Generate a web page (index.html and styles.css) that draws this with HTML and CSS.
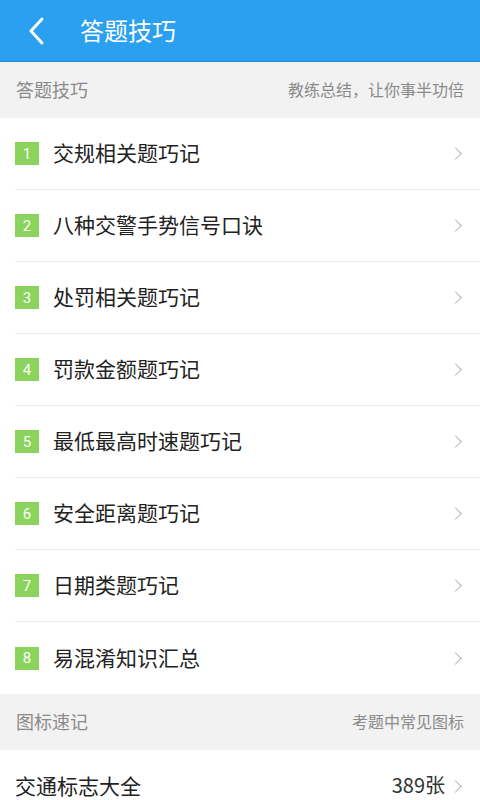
FILE: index.html
```html
<!DOCTYPE html>
<html lang="zh">
<head>
  <meta charset="UTF-8">
  <title>答题技巧</title>
  <link rel="stylesheet" href="styles.css">
</head>
<body>
  <header class="topbar">
    <svg class="back" width="20" height="30" viewBox="0 0 20 30">
      <polyline points="15,3 4,15 15,27" fill="none" stroke="#fff" stroke-width="3" stroke-linecap="round" stroke-linejoin="round"/>
    </svg>
    <h1>答题技巧</h1>
  </header>

  <div class="section-head">
    <span>答题技巧</span>
    <span class="hint">教练总结，让你事半功倍</span>
  </div>
  <ul class="list">
    <li><span class="num">1</span><span class="name">交规相关题巧记</span><i class="arrow"></i></li>
    <li><span class="num">2</span><span class="name">八种交警手势信号口诀</span><i class="arrow"></i></li>
    <li><span class="num">3</span><span class="name">处罚相关题巧记</span><i class="arrow"></i></li>
    <li><span class="num">4</span><span class="name">罚款金额题巧记</span><i class="arrow"></i></li>
    <li><span class="num">5</span><span class="name">最低最高时速题巧记</span><i class="arrow"></i></li>
    <li><span class="num">6</span><span class="name">安全距离题巧记</span><i class="arrow"></i></li>
    <li><span class="num">7</span><span class="name">日期类题巧记</span><i class="arrow"></i></li>
    <li><span class="num">8</span><span class="name">易混淆知识汇总</span><i class="arrow"></i></li>
  </ul>

  <div class="section-head">
    <span>图标速记</span>
    <span class="hint">考题中常见图标</span>
  </div>
  <ul class="list">
    <li><span class="name">交通标志大全</span><span class="count">389张</span><i class="arrow"></i></li>
  </ul>
</body>
</html>
```

FILE: styles.css
```css
body {
  margin: 0;
  font-family: "Noto Sans CJK SC", "Noto Sans", sans-serif;
  background-color: #f2f2f2;
  overflow: hidden;
}

.topbar {
  height: 59px;
  padding-bottom: 2px;
  background-color: #2b9ff0;
  border-bottom: 1px solid #2389d6;
  display: flex;
  align-items: center;
  padding-left: 27px;
}

.topbar .back {
  margin-top: 2px;
}

.topbar h1 {
  margin: 0 0 0 33px;
  font-size: 24px;
  font-weight: normal;
  color: #fff;
}

.section-head {
  height: 54px;
  padding: 0 16px 2px;
  display: flex;
  align-items: center;
  justify-content: space-between;
  font-size: 18px;
  color: #8a8a8a;
}

.section-head .hint {
  font-size: 16px;
}

.list {
  list-style: none;
  margin: 0;
  padding: 0 0 0 15px;
  background: #fff;
}

.list li {
  height: 68px;
  padding: 0 16px 3px 0;
  display: flex;
  align-items: center;
  border-bottom: 1px solid #e8e8e8;
}

.list li:last-child {
  border-bottom: none;
  height: 69px;
}

.num {
  width: 24px;
  height: 23px;
  margin-top: 3px;
  background: #8ad35c;
  color: #fff;
  font-family: Roboto, sans-serif;
  font-size: 15px;
  display: flex;
  align-items: center;
  justify-content: center;
  margin-right: 14px;
}

.name {
  flex: 1;
  font-size: 21px;
  color: #222;
}

.count {
  font-size: 20px;
  color: #333;
  margin-right: 6px;
}

.arrow {
  width: 8px;
  height: 8px;
  margin-top: 3px;
  border-top: 1.5px solid #b5b5b5;
  border-right: 1.5px solid #b5b5b5;
  transform: rotate(45deg);
  margin-right: 4px;
}
```
